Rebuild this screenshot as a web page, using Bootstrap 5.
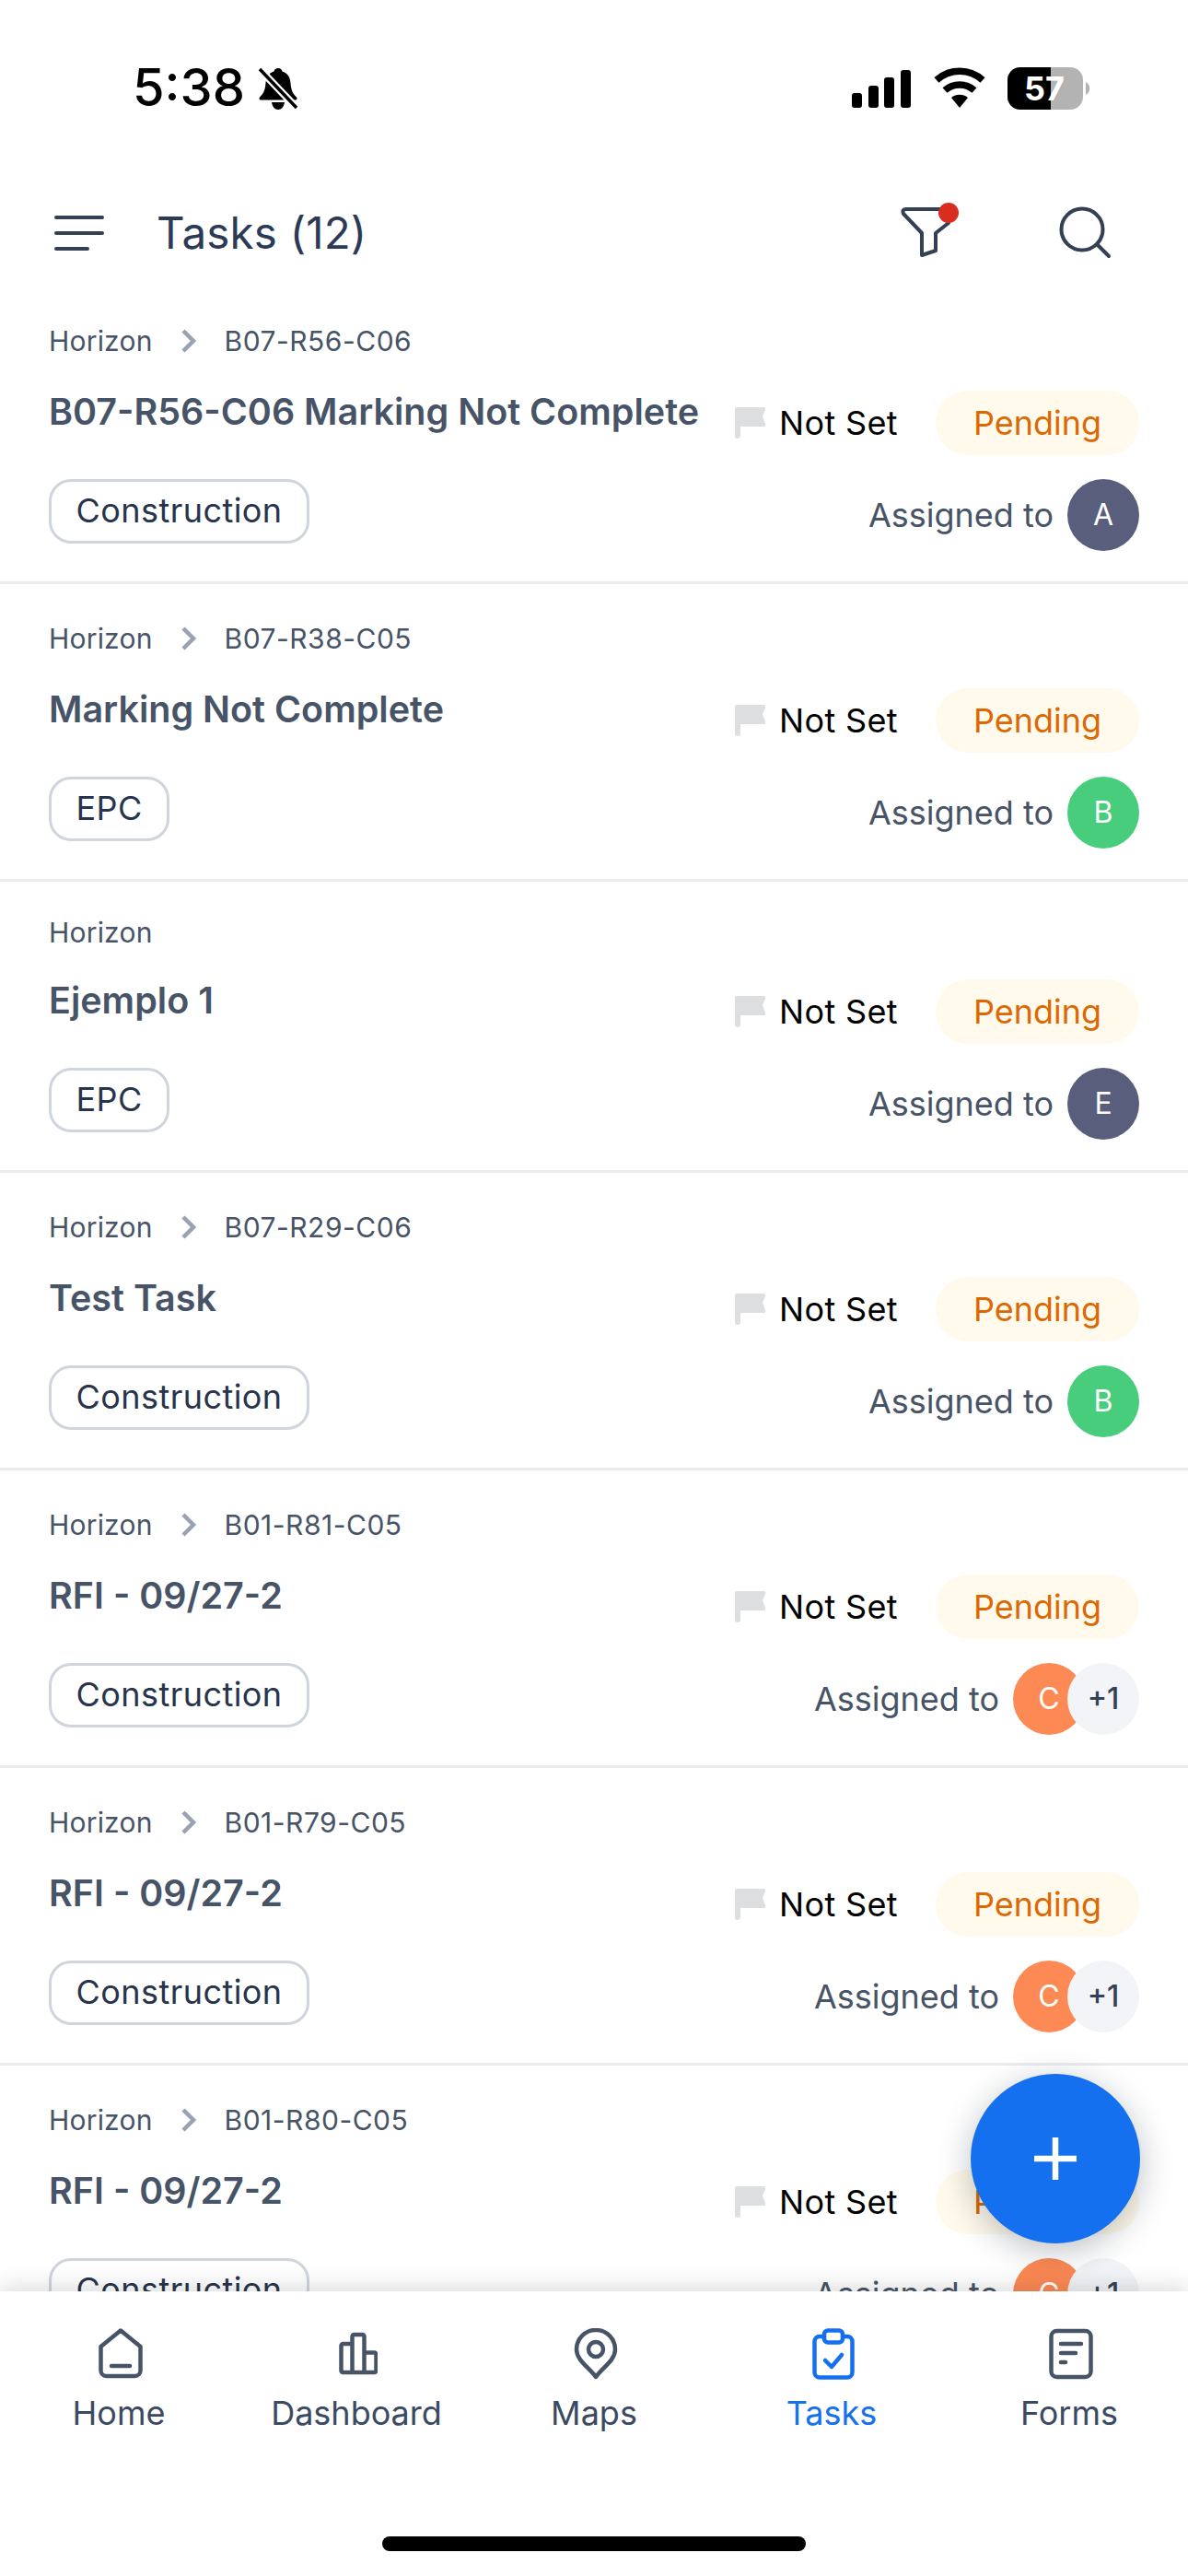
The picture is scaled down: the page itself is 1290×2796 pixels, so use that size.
<!DOCTYPE html>
<html lang="en"><head><meta charset="utf-8">
<link rel="stylesheet" href="https://cdn.jsdelivr.net/npm/bootstrap@5.3.0/dist/css/bootstrap.min.css">
<style>
html,body{margin:0;background:#fff;font-family:Inter,"Noto Sans",sans-serif;}
.phone{width:1290px;height:2796px;overflow:hidden;position:relative;background:#fff;}
.statusbar{height:162px;padding:73px 105px 0 144px;}
.clock{font-size:56px;font-weight:550;line-height:45px;color:#000;}
.bell{margin-left:14px;}
.topbar{height:149px;padding:33px 79px 0 59px;color:#344054;}
.topbar-title{font-size:47.5px;font-weight:400;color:#2c3a55;margin-left:57px;line-height:60px;letter-spacing:.2px;}
.filter-btn{margin-right:107px;}
.task-row{padding:34px 53px 33px;border-bottom:3px solid #eaecf0;}
.crumb-line{height:50px;font-size:30px;color:#475467;line-height:54px;letter-spacing:.2px;}
.crumb-line.bare{height:43px;line-height:47px;}
.crumb-arrow{margin:0 30px 0 30px;}
.crumb-code{letter-spacing:.5px;}
.first-line{margin-top:29px;height:70px;}
.task-title{font-size:39.5px;font-weight:600;line-height:50px;color:#475467;white-space:nowrap;margin-top:-2px;}
.second-line{margin-top:26px;height:78px;}
.kind-chip{height:70px;border:3.5px solid #d0d5dd;border-radius:24px;padding:0 26.500px;font-size:36px;font-weight:400;letter-spacing:.45px;color:#27344b;line-height:63px;}
.prio{font-size:36px;font-weight:400;letter-spacing:.35px;color:#000;margin-right:41px;}
.prio svg{margin-right:14px;}
.state-pill{width:221px;height:70px;border-radius:35px;background:#fffaeb;color:#dc6803;font-size:36px;font-weight:400;}
.assign-text{font-size:36px;color:#475467;margin-right:15px;}
.person{width:78px;height:78px;border-radius:50%;color:#fff;font-size:32px;position:relative;}
.p-slate{background:#5a5e7d;}
.p-green{background:#47cd7c;}
.p-orange{background:#fd8a54;}
.p-more{background:#f2f4f7;color:#344054;margin-left:-19px;font-weight:500;}
.tabbar{position:absolute;left:0;right:0;top:2487px;height:309px;background:#fff;box-shadow:0 -4px 24px rgba(16,24,40,.16);}
.tab-item{width:258px;padding-top:40px;color:#3b4a63;font-size:36px;line-height:44px;}
.tab-item svg{display:block;margin-bottom:14px;margin-left:3px;}
.tab-item.on{color:#1570ef;}
.homebar{position:absolute;left:415px;top:266px;width:460px;height:16px;border-radius:8px;background:#000;}
.fab{position:absolute;left:1054px;top:2251px;width:184px;height:184px;border-radius:50%;background:#1570ef;box-shadow:0 8px 36px rgba(16,24,40,.28);}
</style></head><body>
<div class="phone">
<div class="statusbar d-flex justify-content-between align-items-start">
 <div class="d-flex align-items-start"><span class="clock">5:38</span>
 <svg class="bell" width="44" height="47" viewBox="0 0 44 47"><path d="M22 1c2.500 0 4 1.500 4.500 3.500 5.500 1.500 8.500 6 9 12.500.4 6 1.500 11 6.500 15.500 1 1 .5 3-1 3H3c-1.500 0-2-2-1-3C7 28 8.100 23 8.500 17c.5-6.500 3.500-11 9-12.500C18 2.500 19.500 1 22 1z" fill="#000"/><path d="M15 38h14c-.7 5-3.500 8-7 8s-6.300-3-7-8z" fill="#000"/><path d="M2 2l40 42" stroke="#fff" stroke-width="8"/><path d="M2 2l40 42" stroke="#000" stroke-width="3.500"/></svg></div>
 <div class="d-flex align-items-start">
  <svg width="260" height="46" viewBox="0 0 260 46">
   <g fill="#000"><rect x="0" y="28" width="11" height="16" rx="3"/><rect x="18" y="20" width="11" height="24" rx="3"/><rect x="35" y="11" width="11" height="33" rx="3"/><rect x="53" y="3" width="11" height="41" rx="3"/></g>
   <g fill="none" stroke="#000"><path d="M92 14a37 37 0 0 1 50 0" stroke-width="7.500"/><path d="M101 25a24 24 0 0 1 32 0" stroke-width="7.500"/></g><path d="M108 33a14 14 0 0 1 18 0l-9 11z" fill="#000"/>
   <rect x="169" y="0" width="82" height="46" rx="14" fill="#b3b3b3"/><path d="M183 0h33v46h-33a14 14 0 0 1-14-14V14a14 14 0 0 1 14-14z" fill="#000"/><path d="M254 16a8 8 0 0 1 0 14z" fill="#b3b3b3"/>
   <text x="209" y="36" text-anchor="middle" font-family="Inter" font-size="36" font-weight="700" fill="#fff">57</text>
  </svg>
 </div>
</div>
<div class="topbar d-flex justify-content-between align-items-center">
 <div class="d-flex align-items-center">
  <svg width="54" height="40" viewBox="0 0 54 40" fill="none" stroke="#344054" stroke-width="4" stroke-linecap="round"><path d="M2 3h50M2 20h50M2 37h34"/></svg>
  <span class="topbar-title">Tasks (12)</span>
 </div>
 <div class="d-flex align-items-center">
  <svg class="filter-btn" width="64" height="66" viewBox="0 0 64 66" fill="none"><path d="M44 7H6q-5 0-3 5L23 33v24l15-5V33l14-11" stroke="#344054" stroke-width="4" stroke-linejoin="round" stroke-linecap="round"/><circle cx="52" cy="11" r="11" fill="#d92d20"/></svg>
  <svg width="62" height="60" viewBox="0 0 62 60" fill="none" stroke="#344054" stroke-width="4" stroke-linecap="round"><circle cx="26" cy="26" r="22.500"/><path d="M43 43l12 12"/></svg>
 </div>
</div>
<div id="tasklist"></div>
<div class="fab d-flex align-items-center justify-content-center"><svg width="48" height="48" viewBox="0 0 48 48" stroke="#fff" stroke-width="6.500"><path d="M24 1v46M1 24h46"/></svg></div>
<div class="tabbar">
 <div class="d-flex justify-content-center">
  <div class="tab-item d-flex flex-column align-items-center"><svg width="48" height="56" viewBox="0 0 48 56" fill="none" stroke="#475467" stroke-width="4.500" stroke-linejoin="round" stroke-linecap="round"><path d="M2.500 20L24 2.500 45.500 20v26a6 6 0 0 1-6 6H8.500a6 6 0 0 1-6-6z"/><path d="M14 41h20"/></svg>Home</div>
  <div class="tab-item d-flex flex-column align-items-center"><svg width="42" height="56" viewBox="0 0 42 56" fill="none" stroke="#475467" stroke-width="4.500" stroke-linejoin="round"><path d="M2.500 19a2 2 0 0 1 2-2h10v31h-10a2 2 0 0 1-2-2zM14.500 9a2 2 0 0 1 2-2h9a2 2 0 0 1 2 2v39h-13zM27.500 26.500h11a2 2 0 0 1 2 2V46a2 2 0 0 1-2 2h-11z"/></svg>Dashboard</div>
  <div class="tab-item d-flex flex-column align-items-center"><svg width="48" height="56" viewBox="0 0 48 56" fill="none" stroke="#475467" stroke-width="4.500" stroke-linejoin="round"><path d="M24 53C17 43 3 35 3 23a21 21 0 0 1 42 0c0 12-14 20-21 30z"/><circle cx="24" cy="23" r="8"/></svg>Maps</div>
  <div class="tab-item on d-flex flex-column align-items-center"><svg width="46" height="56" viewBox="0 0 46 56" fill="none" stroke="#1570ef" stroke-width="4.500" stroke-linejoin="round" stroke-linecap="round"><path d="M13 9H8a5.500 5.500 0 0 0-5.500 5.500V48A5.500 5.500 0 0 0 8 53.500h30a5.500 5.500 0 0 0 5.500-5.500V14.500A5.500 5.500 0 0 0 38 9h-5"/><rect x="13" y="2.500" width="20" height="13" rx="4"/><path d="M14 35l7 7 11-13"/></svg>Tasks</div>
  <div class="tab-item d-flex flex-column align-items-center"><svg width="48" height="56" viewBox="0 0 48 56" fill="none" stroke="#475467" stroke-width="4.500" stroke-linejoin="round" stroke-linecap="round"><rect x="2.500" y="3" width="43" height="50" rx="6"/><path d="M13 17h22M13 27h16M13 37h5"/></svg>Forms</div>
 </div>
 <div class="homebar"></div>
</div>
</div>
<script>
const D=[["B07-R56-C06","B07-R56-C06 Marking Not Complete","Construction",[["A","p-slate"]]],
["B07-R38-C05","Marking Not Complete","EPC",[["B","p-green"]]],
["","Ejemplo 1","EPC",[["E","p-slate"]]],
["B07-R29-C06","Test Task","Construction",[["B","p-green"]]],
["B01-R81-C05","RFI - 09/27-2","Construction",[["C","p-orange"],["+1","p-more"]]],
["B01-R79-C05","RFI - 09/27-2","Construction",[["C","p-orange"],["+1","p-more"]]],
["B01-R80-C05","RFI - 09/27-2","Construction",[["C","p-orange"],["+1","p-more"]]]];
const flag='<svg width="34" height="36" viewBox="0 0 34 36"><path d="M0 3a2 2 0 0 1 2-2h29a2 2 0 0 1 2 3l-3 7 3 8a2 2 0 0 1-2 3H6v10a3 3 0 0 1-6 0z" fill="#dcdedf"/></svg>';
const chev='<svg class="crumb-arrow" width="18" height="26" viewBox="0 0 18 26" fill="none" stroke="#98a2b3" stroke-width="4.500"><path d="M3 2l11 11L3 24"/></svg>';
document.getElementById('tasklist').innerHTML=D.map(d=>`<div class="task-row">
<div class="crumb-line d-flex align-items-center ${d[0]?'':'bare'}"><span>Horizon</span>${d[0]?chev+'<span class="crumb-code">'+d[0]+'</span>':''}</div>
<div class="first-line d-flex justify-content-between"><div class="task-title">${d[1]}</div><div class="d-flex align-items-center"><div class="prio d-flex align-items-center">${flag}Not Set</div><div class="state-pill d-flex align-items-center justify-content-center">Pending</div></div></div>
<div class="second-line d-flex justify-content-between align-items-start"><div class="kind-chip">${d[2]}</div><div class="d-flex align-items-center"><span class="assign-text">Assigned to</span>${d[3].map(p=>`<div class="person ${p[1]} d-flex align-items-center justify-content-center">${p[0]}</div>`).join('')}</div></div>
</div>`).join('');
</script>
<script src="https://cdn.jsdelivr.net/npm/bootstrap@5.3.0/dist/js/bootstrap.bundle.min.js"></script>
</body></html>
